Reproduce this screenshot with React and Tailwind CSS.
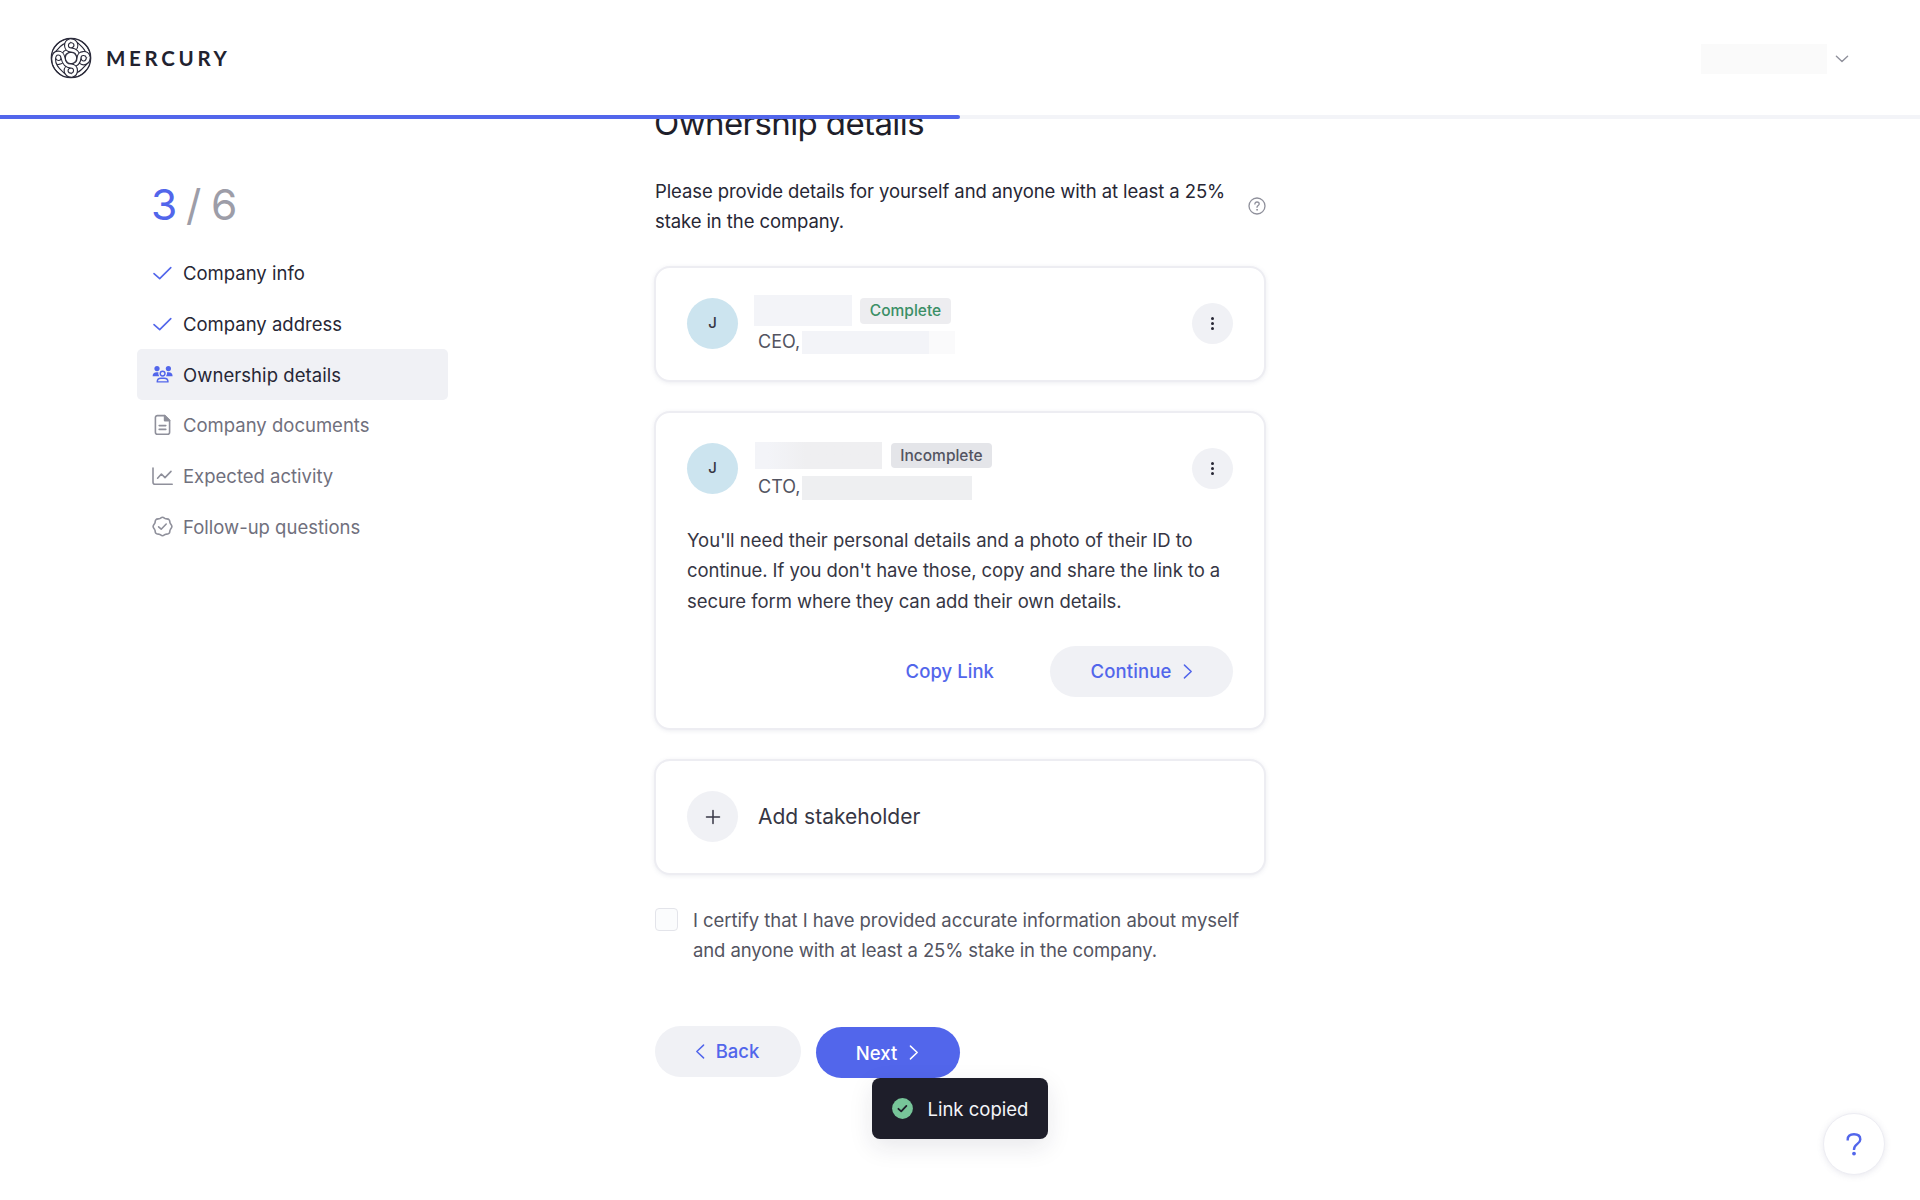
const BAND = "M-19 -6C-15 -8 -11 -18 -1 -17.4C6.8 -17 6.4 -9.2 0.6 -8.1C-5.4 -7 -7.9 -5 -8 0C-8.2 5.8 -15.8 5.8 -17.2 1";

function MercuryMark() {
  return (
    <svg className="size-[42px] shrink-0" viewBox="-21 -21 42 42" fill="none" stroke="#2b2b3b">
      <clipPath id="mark-rim">
        <circle r="20" />
      </clipPath>
      <g clipPath="url(#mark-rim)">
        {[0, 90, 180, 270].map((angle) => (
          <g key={angle} transform={`rotate(${angle})`}>
            <path d={BAND} strokeWidth="5" />
            <path d={BAND} strokeWidth="2.8" stroke="#fff" />
          </g>
        ))}
      </g>
      <circle r="19.7" strokeWidth="1.3" />
      <circle r="5.6" strokeWidth="1" />
    </svg>
  );
}

function Check() {
  return (
    <svg className="h-[20px] w-[21px]" viewBox="0 0 21 20" fill="none" stroke="#5266eb" strokeWidth="1.6" strokeLinecap="round" strokeLinejoin="round">
      <path d="M2 10.6 7.7 15.6 18.8 4.6" />
    </svg>
  );
}

function People() {
  return (
    <svg className="h-[20px] w-[21px]" viewBox="0 0 21 20" fill="#5266eb">
      <circle cx="5" cy="4.6" r="2.6" />
      <circle cx="16.4" cy="4.6" r="2.6" />
      <path d="M.6 12.2C.6 9.6 2.2 8.2 4.6 8.2H6.4A4.6 4.6 0 0 0 7.2 12.2Z" />
      <path d="M20.6 12.2C20.6 9.6 19.2 8.2 16.6 8.2H15A4.6 4.6 0 0 1 14 12.2Z" />
      <g fill="none" stroke="#5266eb" strokeWidth="1.4">
        <circle cx="10.6" cy="9.6" r="2.4" />
        <path d="M5.2 17.9C5.2 15.6 6.8 14.3 9 14.3H12.2C14.4 14.3 16 15.6 16 17.9Z" strokeLinejoin="round" />
      </g>
    </svg>
  );
}

function Doc() {
  return (
    <svg className="h-[22px] w-[21px]" viewBox="0 0 21 22" fill="none" stroke="#8f909b" strokeWidth="1.6" strokeLinecap="round" strokeLinejoin="round">
      <path d="M12.6 1.6H5.4A2 2 0 0 0 3.4 3.6V18.2A2 2 0 0 0 5.4 20.2H15.6A2 2 0 0 0 17.6 18.2V6.6Z" />
      <path d="M12.6 1.6V6.6H17.6Z" fill="#8f909b" />
      <path d="M7.2 11.6H13.8M7.2 15.4H13.8" />
    </svg>
  );
}

function Chart() {
  return (
    <svg className="h-[20px] w-[21px]" viewBox="0 0 21 20" fill="none" stroke="#8f909b" strokeWidth="1.6" strokeLinecap="round" strokeLinejoin="round">
      <path d="M1 2V16.2A2 2 0 0 0 3 18.2H20.2" />
      <path d="M5.6 12.2 9.4 8 13 11.6 19 5.4" />
    </svg>
  );
}

function Badge() {
  return (
    <svg className="size-[21px]" viewBox="0 0 21 21" fill="none" stroke="#8f909b" strokeWidth="1.6" strokeLinecap="round" strokeLinejoin="round">
      <path d="M10.5 1.2C12 1.2 12.5 2.5 13.8 2.8C15 3 16.2 2.6 17.1 3.7C18.1 4.8 17.6 5.8 18.1 7C18.5 8.2 19.9 8.9 19.9 10.5C19.9 12.1 18.5 12.8 18.1 14C17.6 15.2 18.1 16.2 17.1 17.3C16.2 18.4 15 18 13.8 18.2C12.5 18.5 12 19.8 10.5 19.8C9 19.8 8.5 18.5 7.2 18.2C6 18 4.8 18.4 3.9 17.3C2.9 16.2 3.4 15.2 2.9 14C2.5 12.8 1.1 12.1 1.1 10.5C1.1 8.9 2.5 8.2 2.9 7C3.4 5.8 2.9 4.8 3.9 3.7C4.8 2.6 6 3 7.2 2.8C8.5 2.5 9 1.2 10.5 1.2Z" />
      <path d="M6.6 10.9 9.2 13.2 14.2 8" />
    </svg>
  );
}

function Chevron({ className }) {
  return (
    <svg className={className} viewBox="0 0 10 16" fill="none" stroke="currentColor" strokeWidth="1.6" strokeLinecap="round" strokeLinejoin="round">
      <path d="M1.2 1.2 8.4 8 1.2 14.8" />
    </svg>
  );
}

function Step({ icon, label, tone }) {
  return (
    <li className={`flex h-[50.8px] items-center rounded-[5px] pl-[15px] text-[18.5px] whitespace-nowrap ${tone}`}>
      <span className="flex w-[21px] justify-center">{icon}</span>
      <span className="ml-[10px] pt-[2px]">{label}</span>
    </li>
  );
}

function Card({ className, children }) {
  return (
    <section className={`w-[612px] rounded-[16px] border-2 border-[#ededf2] bg-white px-[31px] pt-[30px] shadow-[0_1px_4px_rgba(112,115,147,0.13)] ${className}`}>
      {children}
    </section>
  );
}

function Avatar() {
  return <div className="flex size-[51px] shrink-0 items-center justify-center rounded-full bg-[#cce4ef] text-[15px] font-medium text-[#363644]">J</div>;
}

function Dots() {
  return (
    <button className="mt-[5px] ml-auto flex size-[41px] shrink-0 flex-col items-center justify-center gap-[2.5px] rounded-full bg-[#f0f1f5]">
      <i className="size-[2.6px] rounded-full bg-[#272735]" />
      <i className="size-[2.6px] rounded-full bg-[#272735]" />
      <i className="size-[2.6px] rounded-full bg-[#272735]" />
    </button>
  );
}

export default function App() {
  return (
    <div className="h-[1200px] w-[1920px] overflow-hidden bg-white font-['Inter',sans-serif] text-[#272735]">
      <header className="relative z-10 flex h-[119px] flex-col bg-white">
        <div className="flex h-[115px] items-center justify-between pr-[71px] pl-[50px]">
          <div className="flex items-center gap-[14px]">
            <MercuryMark />
            <span className="font-['Lato',sans-serif] text-[20.5px] leading-[24px] font-bold tracking-[3.7px] text-[#22222f]">MERCURY</span>
          </div>
          <div className="flex items-center gap-[8px]">
            <div className="mt-[2px] h-[30px] w-[126px] bg-[#fafafa]" />
            <svg className="mt-[3px] h-[8px] w-[14px]" viewBox="0 0 14 8" fill="none" stroke="#8f909b" strokeWidth="1.4" strokeLinecap="round" strokeLinejoin="round">
              <path d="M1.4 1.2 7 6.4 12.6 1.2" />
            </svg>
          </div>
        </div>
        <div className="h-[4px] bg-[#f3f4f8]">
          <div className="h-[4px] w-[960px] rounded-r-[2px] bg-[#5266eb]" />
        </div>
      </header>

      <main className="-mt-[19px] flex">
        <aside className="ml-[137px] w-[311px] pt-[79.5px]">
          <p className="flex pl-[14px] text-[42.5px] leading-[50px] text-[#9d9da8]">
            <span className="w-[35px] text-[#5266eb]">3</span>
            <span className="w-[25px]">/</span>
            <span>6</span>
          </p>
          <ul className="mt-[18px]">
            <Step icon={<Check />} label="Company info" tone="text-[#272735]" />
            <Step icon={<Check />} label="Company address" tone="text-[#272735]" />
            <Step icon={<People />} label="Ownership details" tone="bg-[#f0f1f5] text-[#272735] tracking-[0.06px]" />
            <Step icon={<Doc />} label="Company documents" tone="text-[#70707d]" />
            <Step icon={<Chart />} label="Expected activity" tone="text-[#70707d]" />
            <Step icon={<Badge />} label="Follow-up questions" tone="text-[#70707d]" />
          </ul>
        </aside>

        <div className="ml-[206px] w-[612px] pt-[3px]">
          <h1 className="text-[33px] leading-[40px] tracking-[-0.6px] whitespace-nowrap text-[#1e1e2a]">Ownership details</h1>
          <div className="mt-[32.5px] flex items-center justify-between pl-px text-[18.5px] leading-[30.5px] tracking-[-0.09px] whitespace-nowrap">
            <p>
              Please provide details for yourself and anyone with at least a 25%
              <br />
              stake in the company.
            </p>
            <svg className="size-[18px]" viewBox="0 0 18 18" fill="none" stroke="#8f909b" strokeWidth="1.3" strokeLinecap="round">
              <circle cx="9" cy="9" r="8" />
              <path d="M6.9 7.1C6.9 5.8 7.8 5 9 5S11.2 5.8 11.2 7C11.2 8.5 9 8.6 9 10.3" />
              <circle cx="9" cy="12.8" r=".5" fill="#8f909b" stroke="#8f909b" strokeWidth=".8" />
            </svg>
          </div>

          <Card className="mt-[29.5px] h-[116px]">
            <div className="flex">
              <Avatar />
              <div className="-mt-[3px] ml-[15.5px]">
                <div className="flex">
                  <div className="h-[31px] w-[98px] bg-[#f3f4f8]" />
                  <span className="mt-[3px] ml-[8.5px] flex h-[26px] w-[91px] items-center justify-center rounded-[4px] bg-[#ededf0] text-[15.5px] font-medium text-[#3b8f66]">Complete</span>
                </div>
                <div className="mt-[5px] flex h-[23px] items-center pl-[4.5px] text-[18px] text-[#535461]">
                  <span className="w-[44px] pb-[2px]">CEO,</span>
                  <div className="h-[23px] w-[127px] bg-[#f3f4f8]" />
                  <div className="h-[23px] w-[26px] bg-[#fafafb]" />
                </div>
              </div>
              <Dots />
            </div>
          </Card>

          <Card className="mt-[29px] h-[319px]">
            <div className="flex">
              <Avatar />
              <div className="-mt-px ml-[17px]">
                <div className="flex">
                  <div className="h-[27px] w-[127px] bg-linear-to-r from-[#f3f4f8] from-10% to-[#efeff1] to-40%" />
                  <span className="mt-px ml-[9px] flex h-[25px] w-[101px] items-center justify-center rounded-[4px] bg-[#e4e5e9] text-[15.5px] font-medium text-[#535461]">Incomplete</span>
                </div>
                <div className="mt-[7px] flex h-[23px] items-center pl-[3px] text-[18px] text-[#535461]">
                  <span className="w-[43.5px] pb-[2px]">CTO,</span>
                  <div className="h-[24px] w-[170px] bg-[#eeeff1]" />
                </div>
              </div>
              <Dots />
            </div>
            <p className="mt-[25.5px] text-[18.5px] leading-[30.5px] tracking-[-0.07px] whitespace-nowrap text-[#363644]">
              <span className="tracking-[-0.02px]">You'll need their personal details and a photo of their ID to</span>
              <br />
              continue. If you don't have those, copy and share the link to a
              <br />
              secure form where they can add their own details.
            </p>
            <div className="mt-[29.5px] flex justify-end text-[18.5px] font-medium text-[#5266eb]">
              <button className="mr-[56px] h-[51px] pt-[2px] tracking-[0.05px]">Copy Link</button>
              <button className="flex h-[51px] w-[183px] items-center justify-center gap-[11px] rounded-full bg-[#f0f1f5] tracking-[0.15px]">
                <span className="pt-[2px]">Continue</span>
                <Chevron className="h-[15px] w-[10px]" />
              </button>
            </div>
          </Card>

          <Card className="mt-[29px] h-[116px]">
            <div className="flex items-center">
              <div className="flex size-[51px] items-center justify-center rounded-full bg-[#f0f1f5]">
                <svg className="size-[16px]" viewBox="0 0 16 16" stroke="#363644" strokeWidth="1.5" strokeLinecap="round">
                  <path d="M8 1.5V14.5M1.5 8H14.5" />
                </svg>
              </div>
              <span className="ml-[20px] text-[21px] text-[#363644]">Add stakeholder</span>
            </div>
          </Card>

          <label className="mt-[29px] flex pl-px text-[18.5px] leading-[30.5px] tracking-[-0.05px] whitespace-nowrap text-[#535461]">
            <span className="mt-[4px] size-[23px] rounded-[4px] border-[1.5px] border-[#e3e4ea] bg-[#fbfcfd]" />
            <span className="ml-[15px] pt-[0.5px]">
              I certify that I have provided accurate information about myself
              <br />
              <span className="tracking-[-0.11px]">and anyone with at least a 25% stake in the company.</span>
            </span>
          </label>

          <div className="mt-[60.5px] flex pl-px text-[18.5px] font-medium">
            <button className="flex h-[51px] w-[146px] items-center justify-center gap-[11px] rounded-full bg-[#f0f1f5] pr-[2px] text-[#5266eb]">
              <Chevron className="h-[15px] w-[10px] rotate-180" />
              <span className="pt-px">Back</span>
            </button>
            <button className="mt-px ml-[14.5px] flex h-[51px] w-[144px] items-center justify-center gap-[12px] rounded-full bg-[#5266eb] text-white">
              <span className="pt-[2px]">Next</span>
              <Chevron className="h-[15px] w-[10px]" />
            </button>
          </div>
        </div>
      </main>

      <div className="absolute top-[1078px] left-[872px] flex h-[61px] w-[176px] items-center rounded-[8px] bg-[#1e1e2a] pl-[20px] text-[18.5px] whitespace-nowrap text-[#f4f5f9] shadow-[0_8px_24px_rgba(30,30,60,0.1)]">
        <svg className="size-[21px]" viewBox="0 0 21 21" fill="none">
          <circle cx="10.5" cy="10.5" r="10.4" fill="#77c599" />
          <path d="M6.4 10.8 9.2 13.4 14.4 7.9" stroke="#1e1e2a" strokeWidth="1.8" strokeLinecap="round" strokeLinejoin="round" />
        </svg>
        <span className="ml-[14.5px] pt-[2px]">Link copied</span>
      </div>

      <button className="absolute top-[1113px] left-[1823px] flex size-[62px] items-center justify-center rounded-full border border-[#ededf3] bg-white shadow-[0_1px_6px_rgba(112,115,147,0.16)]">
        <svg className="h-[24px] w-[16px]" viewBox="0 0 16 24" fill="none" stroke="#5266eb" strokeWidth="2.4">
          <path d="M1.7 8.4V7.6C1.7 4.2 4.2 2.2 8 2.2S14.3 4.2 14.3 7.4C14.3 12 8 11.8 8 17.4V18" />
          <circle cx="8" cy="21.6" r="1.9" fill="#5266eb" stroke="none" />
        </svg>
      </button>
    </div>
  );
}
